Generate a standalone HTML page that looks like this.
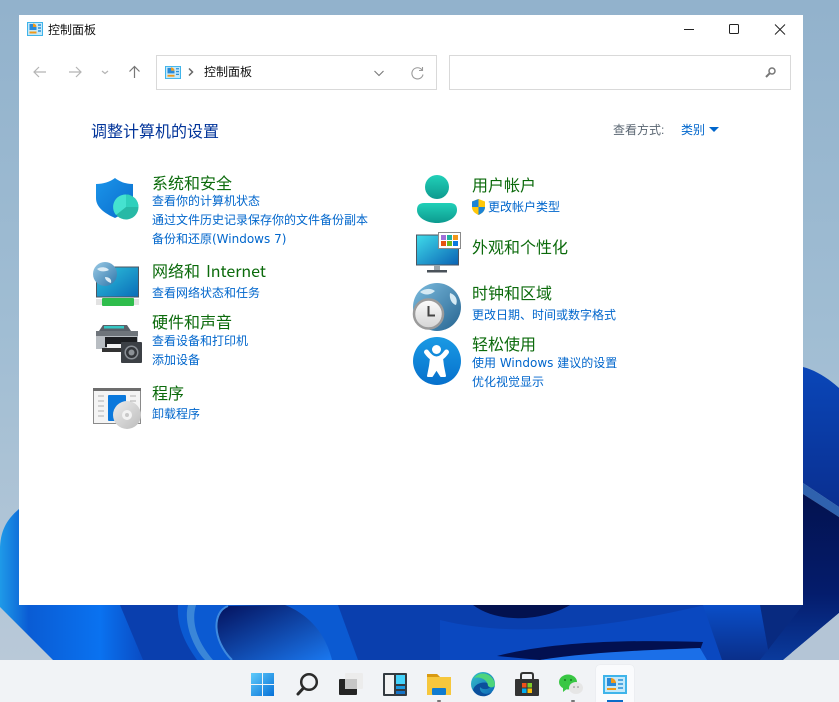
<!DOCTYPE html>
<html lang="zh"><head><meta charset="utf-8"><title>控制面板</title>
<style>
html,body{margin:0;padding:0;width:839px;height:702px;overflow:hidden;background:#9dbad2}
body{position:relative;font-family:"Liberation Sans","Noto Sans CJK SC",sans-serif}
svg{position:absolute;display:block}
.t{position:absolute;white-space:nowrap;line-height:20px;height:20px}
.h{font-size:16px;color:#0b6a0b}
.l{font-size:12px;color:#0066cc}
.n{font-family:"DejaVu Sans","Noto Sans CJK SC",sans-serif}
.m{font-family:"Noto Sans CJK SC",sans-serif;word-spacing:2.500px}
#win{position:absolute;left:19px;top:15px;width:784px;height:590px;background:#fff}
.box{position:absolute;top:55px;height:33px;border:1px solid #d9d9d9;box-sizing:content-box;background:#fff}
#tb{position:absolute;left:0;top:660px;width:839px;height:42px;background:#f1f3f6}
</style></head><body>
<svg style="left:0;top:0" width="839" height="660" viewBox="0 0 839 660">
<defs>
<linearGradient id="bg" x1="0" y1="0" x2="0" y2="1"><stop offset="0" stop-color="#92b2cc"/><stop offset=".5" stop-color="#a0bdd3"/><stop offset="1" stop-color="#b9c9d8"/></linearGradient>
<linearGradient id="b1" gradientUnits="userSpaceOnUse" x1="0" y1="0" x2="143" y2="0"><stop offset="0" stop-color="#1f9ae8"/><stop offset=".2" stop-color="#0a5cd4"/><stop offset=".7" stop-color="#0a72f0"/><stop offset="1" stop-color="#0a4cc4"/></linearGradient>
<linearGradient id="b3" x1="0" y1="0" x2="1" y2="1"><stop offset="0" stop-color="#04115c"/><stop offset="1" stop-color="#1a78f0"/></linearGradient>
<linearGradient id="b4" x1="0" y1="0" x2="0" y2="1"><stop offset="0" stop-color="#0a4ec8"/><stop offset="1" stop-color="#0a2f8a"/></linearGradient>
<linearGradient id="b5" x1="0" y1="0" x2="0" y2="1"><stop offset="0" stop-color="#0a46b8"/><stop offset="1" stop-color="#0a2f90"/></linearGradient>
<linearGradient id="b6" x1="0" y1="0" x2="0" y2="1"><stop offset="0" stop-color="#03124f"/><stop offset=".6" stop-color="#041c6c"/><stop offset="1" stop-color="#0a3a9c"/></linearGradient>
</defs>
<rect width="839" height="660" fill="url(#bg)"/>
<rect x="100" y="604" width="690" height="56" fill="#0a3fae"/>
<path d="M19 509C6 520 0 532 0 550V607L53 660H143L120 605H19Z" fill="url(#b1)"/>
<path d="M178 605C176 630 190 650 197 660H358L338 605Z" fill="#0b5ad2"/>
<path d="M188 605C183 625 195 650 205 660H213C200 645 190 625 196 605Z" fill="#3a86d8"/>
<path d="M228 606C212 612 212 640 232 660H332C326 635 310 615 285 605Z" fill="url(#b3)"/>
<path d="M228 606C212 612 212 640 232 660" fill="none" stroke="#3f8ade" stroke-width="2"/>
<path d="M440 620C520 640 620 625 705 605L722 660H440Z" fill="#0a48c0"/>
<path d="M473 605C500 625 545 620 570 605Z" fill="#03124f"/>
<path d="M497 656C560 640 640 640 703 642L700 650C640 650 580 655 540 660Z" fill="#021050"/>
<path d="M540 660C590 652 650 650 700 648L707 660Z" fill="#1b6fe8"/>
<path d="M703 605L722 660H790L803 605Z" fill="url(#b4)"/>
<path d="M770 660L803 625V605H760Z" fill="#082a80"/>
<path d="M803 367C815 370 828 378 839 388V507L803 483Z" fill="url(#b5)"/>
<path d="M803 483L839 507V517L803 494Z" fill="#2f62ae"/>
<path d="M803 494L839 517V613L783 660H760L803 605Z" fill="url(#b6)"/>
<path d="M839 613L783 660H839Z" fill="#b4c5d6"/>
</svg>

<div id="win"></div>

<!-- title bar -->
<svg style="left:27px;top:22px" width="16" height="14" viewBox="0 0 16 14"><rect width="16" height="14" fill="#3fb4ea"/><rect x="1" y="1" width="14" height="12" fill="#c4e9fa"/><path d="M2.500 2h4v3h3v3h-7Z" fill="#2a8ad8"/><path d="M6 1.500a3.500 3.500 0 0 1 3.500 3.500H6Z" fill="#f09a1c"/><rect x="2.500" y="9.500" width="7" height="2" fill="#f09a1c"/><path d="M11 3h3M11 6h3M11 9h3" stroke="#2a90d8" stroke-width="1.4"/></svg>
<div class="t" style="left:48px;top:20px;font-size:12px;color:#111">控制面板</div>
<svg style="left:680px;top:20px" width="110" height="20" viewBox="0 0 110 20" fill="none" stroke="#222" stroke-width="1"><path d="M4 9.500H14"/><rect x="49.500" y="4.500" width="9" height="9" rx="1"/><path d="M95 4.500L105 14.500M105 4.500L95 14.500"/></svg>

<!-- nav -->
<svg style="left:30px;top:62px" width="115" height="20" viewBox="0 0 115 20" fill="none" stroke="#b4b4b4" stroke-width="1.200"><path d="M4 10H16M9 5L4 10L9 15"/><path d="M39 10H51M46 5L51 10L46 15"/><path d="M72 9L75 11.500L78 9"/><path stroke="#777" d="M104.500 16V4.500M99.500 9.500L104.500 4.500L109.500 9.500"/></svg>
<div class="box" style="left:156px;width:279px"></div>
<svg style="left:165px;top:66px" width="16" height="13" viewBox="0 0 16 14" preserveAspectRatio="none"><rect width="16" height="14" fill="#3fb4ea"/><rect x="1" y="1" width="14" height="12" fill="#c4e9fa"/><path d="M2.500 2h4v3h3v3h-7Z" fill="#2a8ad8"/><path d="M6 1.500a3.500 3.500 0 0 1 3.500 3.500H6Z" fill="#f09a1c"/><rect x="2.500" y="9.500" width="7" height="2" fill="#f09a1c"/><path d="M11 3h3M11 6h3M11 9h3" stroke="#2a90d8" stroke-width="1.4"/></svg>
<svg style="left:187px;top:67px" width="8" height="10" viewBox="0 0 8 10" fill="none" stroke="#666" stroke-width="1.500"><path d="M2 1.500L5.500 5L2 8.500"/></svg>
<div class="t" style="left:204px;top:62px;font-size:12px;color:#111">控制面板</div>
<svg style="left:372px;top:69px" width="14" height="9" viewBox="0 0 14 9" fill="none" stroke="#777" stroke-width="1.100"><path d="M2.500 2L7 6.500L11.500 2"/></svg>
<svg style="left:410px;top:66px" width="15" height="15" viewBox="0 0 15 15" fill="none" stroke="#9a9a9a" stroke-width="1.100"><path d="M12 4A5.600 5.600 0 1 0 13 8.500"/><path d="M12.500 1V4.500H9"/></svg>
<div class="box" style="left:449px;width:340px"></div>
<svg style="left:763px;top:65px" width="15" height="15" viewBox="0 0 15 15" fill="none" stroke="#777" stroke-width="1.500"><circle cx="9" cy="6" r="3"/><path d="M6.800 8.200L3 12" stroke-width="2"/></svg>

<!-- heading -->
<div class="t" style="left:91px;top:123px;font-size:16px;color:#003399">调整计算机的设置</div>
<div class="t" style="left:613px;top:120px;font-size:12px;color:#5a6672">查看方式:</div>
<div class="t" style="left:681px;top:120px;font-size:12px;color:#0066cc">类别</div>
<svg style="left:709px;top:127px" width="10" height="6" viewBox="0 0 10 6"><path d="M0 0H10L5 5Z" fill="#0066cc"/></svg>

<!-- left column text -->
<div class="t h" style="left:152px;top:175px">系统和安全</div>
<div class="t l" style="left:152px;top:191px">查看你的计算机状态</div>
<div class="t l" style="left:152px;top:210px">通过文件历史记录保存你的文件备份副本</div>
<div class="t l n" style="left:152px;top:229px">备份和还原(Windows 7)</div>
<div class="t h m" style="left:152px;top:260px">网络和 Internet</div>
<div class="t l" style="left:152px;top:283px">查看网络状态和任务</div>
<div class="t h" style="left:152px;top:314px">硬件和声音</div>
<div class="t l" style="left:152px;top:331px">查看设备和打印机</div>
<div class="t l" style="left:152px;top:350px">添加设备</div>
<div class="t h" style="left:152px;top:385px">程序</div>
<div class="t l" style="left:152px;top:404px">卸载程序</div>

<!-- right column text -->
<div class="t h" style="left:472px;top:177px">用户帐户</div>
<div class="t l" style="left:488px;top:197px">更改帐户类型</div>
<div class="t h" style="left:472px;top:239px">外观和个性化</div>
<div class="t h" style="left:472px;top:285px">时钟和区域</div>
<div class="t l" style="left:472px;top:305px">更改日期、时间或数字格式</div>
<div class="t h" style="left:472px;top:336px">轻松使用</div>
<div class="t l n" style="left:472px;top:353px">使用 Windows 建议的设置</div>
<div class="t l" style="left:472px;top:372px">优化视觉显示</div>

<!-- icons -->
<svg style="left:90px;top:172px" width="52" height="52" viewBox="90 172 52 52">
<defs><linearGradient id="sh" x1="0" y1="0" x2="1" y2="1"><stop offset="0" stop-color="#1b95ea"/><stop offset="1" stop-color="#0a6ccc"/></linearGradient></defs>
<path d="M115 178C110 182 103 184 96 184V198C96 207 104 213 115 218C126 213 133 207 133 198V184C126 184 120 182 115 178Z" fill="url(#sh)"/>
<circle cx="126" cy="207" r="12.500" fill="#27b9a6"/><path d="M126 194.500A12.500 12.500 0 0 0 116 215L126 207Z" fill="#45e2d0"/><path d="M126 194.500A12.500 12.500 0 0 1 138.500 207H126Z" fill="#2fd0bc"/>
</svg>
<svg style="left:90px;top:258px" width="52" height="50" viewBox="90 258 52 50">
<defs><linearGradient id="sc" x1="0" y1="0" x2="1" y2="1"><stop offset="0" stop-color="#2fc4dc"/><stop offset="1" stop-color="#0a6cb8"/></linearGradient><linearGradient id="gl" x1="0" y1="0" x2="1" y2="1"><stop offset="0" stop-color="#9ccbe6"/><stop offset="1" stop-color="#2f77aa"/></linearGradient></defs>
<rect x="96.500" y="267" width="42" height="30" fill="url(#sc)" stroke="#4d5560"/>
<rect x="96" y="299" width="43" height="6" fill="#e2e2e2"/><rect x="102" y="298" width="32" height="8" rx="1" fill="#2fbd4c"/>
<circle cx="105" cy="274" r="12" fill="url(#gl)"/><path d="M97 269C101 266 107 267 109 270C105 272 100 272 97 269ZM105 277C109 277 112 279 111 283C108 282 105 280 105 277Z" fill="#dcecf5"/>
</svg>
<svg style="left:90px;top:320px" width="54" height="48" viewBox="90 320 54 48">
<path d="M103 325H127L131 331H99Z" fill="#5a6068"/><rect x="104" y="326" width="20" height="2.500" fill="#35c7c4"/>
<path d="M96 331H138V349H96Z" fill="#b8bdc2"/><path d="M96 331H138V336H96Z" fill="#6f757b"/><rect x="105" y="337" width="32" height="10" fill="#1d1f22"/><rect x="102" y="348" width="28" height="4" fill="#333"/><rect x="107" y="344" width="24" height="4" fill="#f1f1f1"/>
<rect x="121" y="342" width="21" height="21" rx="1" fill="#3c4045"/><circle cx="131.500" cy="352.500" r="7" fill="#8a8f95"/><circle cx="131.500" cy="352.500" r="5.500" fill="#33363a"/><circle cx="131.500" cy="352.500" r="3" fill="#8c9196"/>
</svg>
<svg style="left:90px;top:385px" width="54" height="48" viewBox="90 385 54 48">
<defs><linearGradient id="cd" x1="0" y1="0" x2="1" y2="1"><stop offset="0" stop-color="#ececec"/><stop offset="1" stop-color="#bcbcbc"/></linearGradient></defs>
<rect x="93.500" y="388.500" width="47" height="35" fill="#f4f4f4" stroke="#8a8a8a"/><rect x="93" y="388" width="48" height="3" fill="#6d6d6d"/>
<path d="M98 396H104M98 401H104M98 406H104M98 411H104M98 416H104M130 396H136M130 401H136M130 406H136" stroke="#b0b0b0"/>
<rect x="108" y="395" width="18" height="26" rx="1" fill="#0a78dc"/>
<circle cx="127" cy="415" r="14" fill="url(#cd)"/><circle cx="127" cy="415" r="5" fill="#f2f2f2"/><circle cx="127" cy="415" r="2" fill="#c8c8c8"/>
</svg>
<svg style="left:410px;top:170px" width="54" height="56" viewBox="410 170 54 56">
<defs><linearGradient id="us" x1="0" y1="0" x2="0" y2="1"><stop offset="0" stop-color="#21d0b8"/><stop offset="1" stop-color="#0d9a8f"/></linearGradient></defs>
<circle cx="437" cy="187" r="12" fill="url(#us)"/><path d="M424 203H450Q457 203 457 210C457 218 447 223 437 223C427 223 417 218 417 210Q417 203 424 203Z" fill="url(#us)"/>
</svg>
<svg style="left:471px;top:199px" width="15" height="16" viewBox="0 0 15 16"><path d="M7.500 0L14 2.500V8C14 12 11 14.500 7.500 16C4 14.500 1 12 1 8V2.500Z" fill="#ffc70a"/><path d="M7.500 0L1 2.500V8H7.500ZM7.500 8V16C11 14.500 14 12 14 8Z" fill="#1b84d6"/></svg>
<svg style="left:412px;top:229px" width="52" height="46" viewBox="412 229 52 46">
<defs><linearGradient id="mo" x1="0" y1="0" x2="1" y2="1"><stop offset="0" stop-color="#3fdcea"/><stop offset="1" stop-color="#0a62b4"/></linearGradient></defs>
<rect x="416.500" y="235" width="42" height="30" fill="url(#mo)" stroke="#4d5560"/><rect x="434" y="265" width="6" height="5" fill="#9aa4aa"/><rect x="427" y="270" width="20" height="2.500" fill="#4a525a"/>
<rect x="438.500" y="232.500" width="22" height="16" fill="#fff" stroke="#8a8a8a"/>
<rect x="441" y="235" width="5" height="5" fill="#a070d8"/><rect x="447" y="235" width="5" height="5" fill="#1eb0a0"/><rect x="453" y="235" width="5" height="5" fill="#f0961a"/>
<rect x="441" y="241" width="5" height="5" fill="#e8540f"/><rect x="447" y="241" width="5" height="5" fill="#6cb81c"/><rect x="453" y="241" width="5" height="5" fill="#0a7ade"/>
</svg>
<svg style="left:410px;top:280px" width="54" height="54" viewBox="410 280 54 54">
<defs><linearGradient id="gl2" x1="0" y1="0" x2="1" y2="1"><stop offset="0" stop-color="#7cbcdf"/><stop offset="1" stop-color="#266490"/></linearGradient><linearGradient id="ck" x1="0" y1="0" x2="0" y2="1"><stop offset="0" stop-color="#fdfdfd"/><stop offset="1" stop-color="#d4d4d4"/></linearGradient></defs>
<circle cx="437" cy="307" r="24" fill="url(#gl2)"/><path d="M450 293C456 295 458 300 456 305C452 304 449 299 450 293ZM420 292C425 288 431 288 435 291C431 295 425 296 420 292Z" fill="#d6eaf4"/>
<circle cx="428.500" cy="314" r="14.500" fill="url(#ck)" stroke="#9b9b9b" stroke-width="2.500"/><path d="M428.500 306V315.500H435" fill="none" stroke="#444" stroke-width="2"/>
</svg>
<svg style="left:410px;top:333px" width="54" height="54" viewBox="410 333 54 54">
<defs><linearGradient id="ac" x1="0" y1="0" x2="0" y2="1"><stop offset="0" stop-color="#1a9ae4"/><stop offset="1" stop-color="#0670cc"/></linearGradient></defs>
<circle cx="437" cy="361" r="24" fill="url(#ac)"/><circle cx="436.500" cy="349.500" r="4.500" fill="#fff"/>
<path d="M426.500 352C430 357 433 359 436.500 359C440 359 443 357 446.500 352" fill="none" stroke="#fff" stroke-width="5" stroke-linecap="round"/>
<path d="M431 358H442L443 366L445 376H441L436.500 369L432 376H428L430 366Z" fill="#fff" stroke="#fff" stroke-linejoin="round" stroke-width="2"/>
</svg>

<!-- taskbar -->
<div id="tb"></div>
<div style="position:absolute;left:596px;top:665px;width:38px;height:37px;background:#fafbfd;border-radius:4px 4px 0 0;box-shadow:0 0 1px #d5d8dd"></div>
<svg style="left:0;top:660px" width="839" height="42" viewBox="0 660 839 42">
<defs>
<linearGradient id="w1" gradientUnits="userSpaceOnUse" x1="251" y1="673" x2="274" y2="696"><stop offset="0" stop-color="#5fcbfa"/><stop offset="1" stop-color="#0670d8"/></linearGradient>
<linearGradient id="ed" x1="0" y1="0" x2="1" y2="1"><stop offset="0" stop-color="#35c1c9"/><stop offset="1" stop-color="#0a63b8"/></linearGradient>
</defs>
<g fill="url(#w1)"><rect x="251" y="673" width="11" height="11"/><rect x="263" y="673" width="11" height="11"/><rect x="251" y="685" width="11" height="11"/><rect x="263" y="685" width="11" height="11"/></g>
<circle cx="309" cy="682" r="7.800" fill="none" stroke="#2b2b2b" stroke-width="2.500"/><path d="M303.500 688L298 694" stroke="#2b2b2b" stroke-width="3" stroke-linecap="round"/>
<rect x="339" y="679" width="18" height="16" rx="1" fill="#242424"/><rect x="345" y="673" width="18" height="16" rx="1" fill="#ececec"/><rect x="345" y="679" width="12" height="10" fill="#c6c6c6"/>
<rect x="383" y="673" width="24" height="23" rx="1" fill="#333a40"/><rect x="385" y="675" width="9" height="19" fill="#f2f2f2"/><rect x="396" y="675" width="9" height="9" fill="#45d3fb"/><rect x="396" y="686" width="9" height="3" fill="#1a9ae0"/><rect x="396" y="691" width="9" height="3" fill="#1474c8"/>
<path d="M427 674H437L440 677H451V695H427Z" fill="#f6c73d"/><path d="M427 674H437L440 677H427Z" fill="#d99a12"/><rect x="432" y="688" width="14" height="7" rx="1" fill="#0f7bd0"/><rect x="437" y="700" width="4" height="2" rx="1" fill="#777"/>
<circle cx="483" cy="684" r="12" fill="url(#ed)"/><path d="M473 690C475 682 488 680 491 686C489 690 482 690 480 687C479 693 486 696 492 692C488 698 477 698 473 690Z" fill="#0b4f9c"/><path d="M474 678C480 670 493 673 495 684C495 688 490 688 488 686C488 680 480 676 474 678Z" fill="#4ed57c"/>
<rect x="515" y="679" width="24" height="17" rx="1" fill="#333"/><path d="M521 679V675Q521 673 523 673H531Q533 673 533 675V679" fill="none" stroke="#333" stroke-width="2"/>
<rect x="522" y="683" width="4.500" height="4.500" fill="#f1511b"/><rect x="527.500" y="683" width="4.500" height="4.500" fill="#80cc28"/><rect x="522" y="688.500" width="4.500" height="4.500" fill="#00adef"/><rect x="527.500" y="688.500" width="4.500" height="4.500" fill="#fbbc09"/>
<ellipse cx="568" cy="682" rx="9" ry="7.500" fill="#39c744"/><path d="M563 687L563 692L568 688Z" fill="#39c744"/><ellipse cx="576" cy="688" rx="7" ry="6" fill="#e6e6e6"/><circle cx="565" cy="680" r="1" fill="#167a20"/><circle cx="571" cy="680" r="1" fill="#167a20"/><circle cx="574" cy="687" r=".8" fill="#888"/><circle cx="578" cy="687" r=".8" fill="#888"/>
<rect x="571" y="700" width="4" height="2" rx="1" fill="#777"/>
<rect x="603" y="675" width="24" height="19" fill="#3fb4ea"/><rect x="605" y="677" width="20" height="15" fill="#c4e9fa"/><path d="M607 678h5v4h4v4h-9Z" fill="#2a8ad8"/><path d="M611 678a5 5 0 0 1 5 5h-5Z" fill="#f09a1c"/><rect x="607" y="688" width="9" height="2" fill="#f09a1c"/><path d="M618 680h5M618 684h5M618 688h5" stroke="#2a90d8" stroke-width="1.500"/>
<rect x="607" y="700" width="16" height="2" fill="#0a6cc8"/>
</svg>
</body></html>
